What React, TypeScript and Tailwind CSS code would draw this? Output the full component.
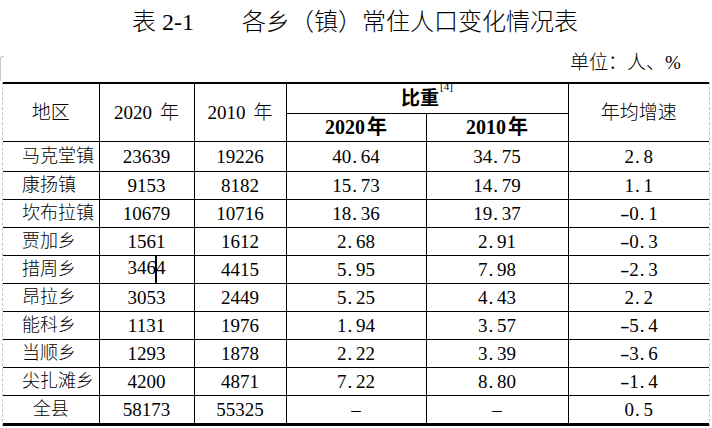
import React from "react";

const rows: string[][] = [
  ["马克堂镇", "23639", "19226", "40.64", "34.75", "2.8"],
  ["康扬镇", "9153", "8182", "15.73", "14.79", "1.1"],
  ["坎布拉镇", "10679", "10716", "18.36", "19.37", "-0.1"],
  ["贾加乡", "1561", "1612", "2.68", "2.91", "-0.3"],
  ["措周乡", "3464", "4415", "5.95", "7.98", "-2.3"],
  ["昂拉乡", "3053", "2449", "5.25", "4.43", "2.2"],
  ["能科乡", "1131", "1976", "1.94", "3.57", "-5.4"],
  ["当顺乡", "1293", "1878", "2.22", "3.39", "-3.6"],
  ["尖扎滩乡", "4200", "4871", "7.22", "8.80", "-1.4"],
  ["全县", "58173", "55325", "–", "–", "0.5"],
];

function Num({ v, caret }: { v: string; caret?: boolean }) {
  const chars = v.split("");
  return (
    <>
      {chars.map((c, i) => {
        const node =
          c === "." ? (
            <span key={i} className="inline-block w-[0.5em] text-left pl-[1px]">
              .
            </span>
          ) : c === "-" ? (
            <span key={i} className="inline-block w-[0.5em] text-center scale-x-[1.5]">
              -
            </span>
          ) : (
            <React.Fragment key={i}>{c}</React.Fragment>
          );
        if (caret && i === 3) {
          return (
            <React.Fragment key={i}>
              <span className="inline-block w-[2px] h-[27px] bg-black -mx-[1px] align-middle" />
              {node}
            </React.Fragment>
          );
        }
        return node;
      })}
    </>
  );
}

export default function App() {
  return (
    <div className="relative w-[712px] h-[428px] overflow-hidden bg-white text-black font-light font-['Liberation_Serif','Noto_Sans_CJK_SC',serif]">
      {/* title */}
      <div className="h-[44px] flex items-center pl-[132px] text-[24px] leading-none">
        <span className="w-[110px] whitespace-nowrap">表 2-1</span>
        <span className="whitespace-nowrap">各乡（镇）常住人口变化情况表</span>
      </div>
      {/* unit */}
      <div className="h-[38px] flex items-center pl-[570px] text-[19px] leading-none pb-[2px]">
        <span className="whitespace-nowrap">单位：人、%</span>
      </div>
      {/* corner mark */}
      <div className="absolute left-0 top-[56px] w-[4px] h-[25px] border-l border-t border-[#c8c8c8] rounded-tl-[3px]" />
      {/* table */}
      <div className="ml-[2px] w-[708px] h-[400px] border-x border-dashed border-[#c4c4c4]">
        <table className="table-fixed border-collapse w-[706px]">
          <colgroup>
            <col className="w-[96px]" />
            <col className="w-[95px]" />
            <col className="w-[92px]" />
            <col className="w-[140px]" />
            <col className="w-[142px]" />
            <col className="w-[141px]" />
          </colgroup>
          <thead>
            <tr className="h-[30px]">
              <th rowSpan={2} className="border-t-2 border-b border-r border-black font-light text-[19px] leading-none text-center">
                地区
              </th>
              <th rowSpan={2} className="border-t-2 border-b border-x border-black font-light text-[19px] leading-none text-center whitespace-nowrap">
                2020<span className="ml-[8px]">年</span>
              </th>
              <th rowSpan={2} className="border-t-2 border-b border-x border-black font-light text-[19px] leading-none text-center whitespace-nowrap">
                2010<span className="ml-[8px]">年</span>
              </th>
              <th colSpan={2} className="border-t-2 border-b border-x border-black font-bold text-[19px] leading-none text-center whitespace-nowrap">
                比重<sup className="text-[11px] font-normal align-top relative top-[-3px] ml-[1px]">[4]</sup>
              </th>
              <th rowSpan={2} className="border-t-2 border-b border-l border-black font-light text-[19px] leading-none text-center">
                年均增速
              </th>
            </tr>
            <tr className="h-[28px]">
              <th className="border border-black font-bold text-[20px] leading-none text-center whitespace-nowrap">
                2020<span className="ml-[2px]">年</span>
              </th>
              <th className="border border-black font-bold text-[20px] leading-none text-center whitespace-nowrap">
                2010<span className="ml-[2px]">年</span>
              </th>
            </tr>
          </thead>
          <tbody>
            {rows.map((r, ri) => {
              const last = ri === rows.length - 1;
              const h = ri === 0 ? "h-[30px]" : last ? "h-[29px]" : "h-[28px]";
              const bb = last ? "border-b-[3px]" : "border-b";
              return (
                <tr key={ri} className={h}>
                  <td
                    className={`border-t border-r ${bb} border-black text-[18px] leading-none whitespace-nowrap ${
                      last ? "text-center" : "text-left pl-[19px]"
                    }`}
                  >
                    {r[0]}
                  </td>
                  {r.slice(1).map((c, ci) => (
                    <td
                      key={ci}
                      className={`border-t ${bb} ${ci === 4 ? "border-l" : "border-x"} border-black text-[19px] leading-none text-center whitespace-nowrap`}
                    >
                      <Num v={c} caret={ri === 4 && ci === 0} />
                    </td>
                  ))}
                </tr>
              );
            })}
          </tbody>
        </table>
      </div>
    </div>
  );
}
